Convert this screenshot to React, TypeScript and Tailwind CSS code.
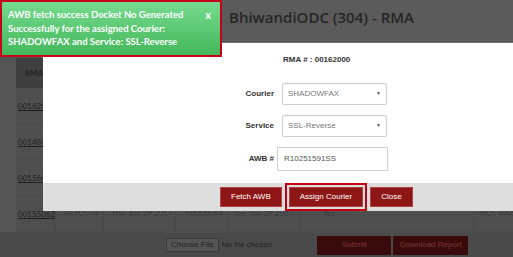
import React from 'react';

const rows = ['00162000', '00148011', '00156027', '00155062'];

function Toast() {
  return (
    <div className="absolute left-0 top-0 z-20 flex h-[57px] w-[222px] items-start justify-between border-2 border-[#c4001c] bg-gradient-to-b from-[#75da8e] to-[#42b85a] pl-[6px] pr-[9px] pt-[6px] font-['Lato',sans-serif] text-[9.5px] font-bold leading-[13.5px] text-white">
      <p>
        AWB fetch success Docket No Generated Successfully for the assigned Courier: SHADOWFAX and Service: SSL-Reverse
      </p>
      <span className="ml-2 text-[11px]">x</span>
    </div>
  );
}

function Field({ label, children, gap = 'gap-[8px]' }: { label: string; children: React.ReactNode; gap?: string }) {
  return (
    <div className={`flex items-center ${gap}`}>
      <span className="w-[60px] text-right text-[8px] font-bold text-[#333]">{label}</span>
      {children}
    </div>
  );
}

function Select({ value }: { value: string }) {
  return (
    <div className="flex h-[22px] w-[105px] items-center justify-between rounded-[2px] border border-[#cfcfcf] bg-white pl-[5px] pr-[5px] text-[8px] text-[#777] shadow-[inset_0_1px_1px_rgba(0,0,0,0.06)]">
      <span>{value}</span>
      <span className="text-[5px] text-[#444]">▼</span>
    </div>
  );
}

function Btn({ children, active }: { children: React.ReactNode; active?: boolean }) {
  return (
    <button
      className={`h-[20px] border border-[#b04444] bg-[#8e1616] px-[10px] text-[8px] text-white ${
        active ? 'outline-2 outline-offset-[2px] outline-[#c00010]' : ''
      }`}
    >
      {children}
    </button>
  );
}

function Modal() {
  return (
    <div className="absolute left-[43px] top-[43px] z-10 w-[520px] font-['Liberation_Sans',Arial,sans-serif]">
      <div className="h-[140px] bg-white pl-[171px] pt-[11px]">
        <div className="pl-[69px] text-[8px] font-bold text-[#333]">RMA # : 00162000</div>
        <div className="mt-[17px] flex flex-col gap-[10px]">
          <Field label="Courier">
            <Select value="SHADOWFAX" />
          </Field>
          <Field label="Service">
            <Select value="SSL-Reverse" />
          </Field>
          <Field label="AWB #" gap="gap-[3px]">
            <div className="flex h-[24px] w-[111px] items-center border border-[#cfcfcf] bg-white pl-[6px] text-[8px] text-[#555]">
              R10251591SS
            </div>
          </Field>
        </div>
      </div>
      <div className="flex h-[28px] items-center gap-[7px] bg-[#dedede] pl-[177px]">
        <Btn>Fetch AWB</Btn>
        <Btn active>Assign Courier</Btn>
        <Btn>Close</Btn>
      </div>
    </div>
  );
}

export default function App() {
  return (
    <div className="relative h-[257px] w-[513px] overflow-hidden bg-[#545454] font-['Lato',sans-serif]">
      <header className="h-[43px] border-b border-[#6b6b6b] bg-[#5b5b5b] pl-[229px] pt-[8px] font-['Open_Sans',sans-serif] text-[15px] font-semibold leading-[18px] text-[#262626]">
        BhiwandiODC (304) - RMA
      </header>

      <div className="ml-[16px] mt-[15px]">
        <div className="flex h-[30px] w-[497px] items-center bg-[#3f3f3f] pl-[9px] text-[8px] text-[#1c1c1c]">RMA #</div>
        {rows.map((r, i) => (
          <div
            key={r}
            className="grid h-[36px] w-[497px] grid-cols-[39px_48px_72px_53px_72px_58px_115px_40px] items-center overflow-hidden whitespace-nowrap border-b border-[#4a4a4a] bg-[#4f4f4f] text-[8px] text-[#3b3b3b]"
          >
            <span className="pl-[2px] text-[#1e1e1e] underline">{r}</span>
            {i === 3 && (
              <>
                <span className="border-l border-[#494949] pl-[8px] leading-[35px]">RETOT04</span>
                <span className="border-l border-[#494949] pl-[7px] leading-[35px]">Thu, Jun 29 2017</span>
                <span className="border-l border-[#494949] pl-[10px] leading-[35px]">00000064</span>
                <span className="border-l border-[#494949] pl-[4px] leading-[35px]">Tue, Jun 29 2017</span>
                <span className="border-l border-[#494949] pl-[22px] leading-[35px]">Yes</span>
                <span className="border-l border-[#494949] leading-[35px]"></span>
                <span className="overflow-hidden border-l border-[#494949] pl-[6px] leading-[35px]">NOT RAISED</span>
              </>
            )}
          </div>
        ))}
      </div>

      <div className="flex h-[25px] items-center border-t border-[#4e4e4e] bg-[#4a4a4a] pl-[166px] font-['Liberation_Sans',Arial,sans-serif] text-[8px]">
        <span className="flex h-[14px] items-center border border-[#3a3a3a] bg-[#555] px-[4px] text-[#222]">Choose File</span>
        <span className="ml-[3px] text-[#262626]">No file chosen</span>
        <button className="ml-[45px] h-[19px] w-[74px] bg-[#3a0b0b] text-[#7a3a3a]">Submit</button>
        <button className="ml-[2px] h-[19px] w-[75px] bg-[#3a0b0b] text-[#7a3a3a]">Download Report</button>
      </div>

      <Modal />
      <Toast />
    </div>
  );
}
